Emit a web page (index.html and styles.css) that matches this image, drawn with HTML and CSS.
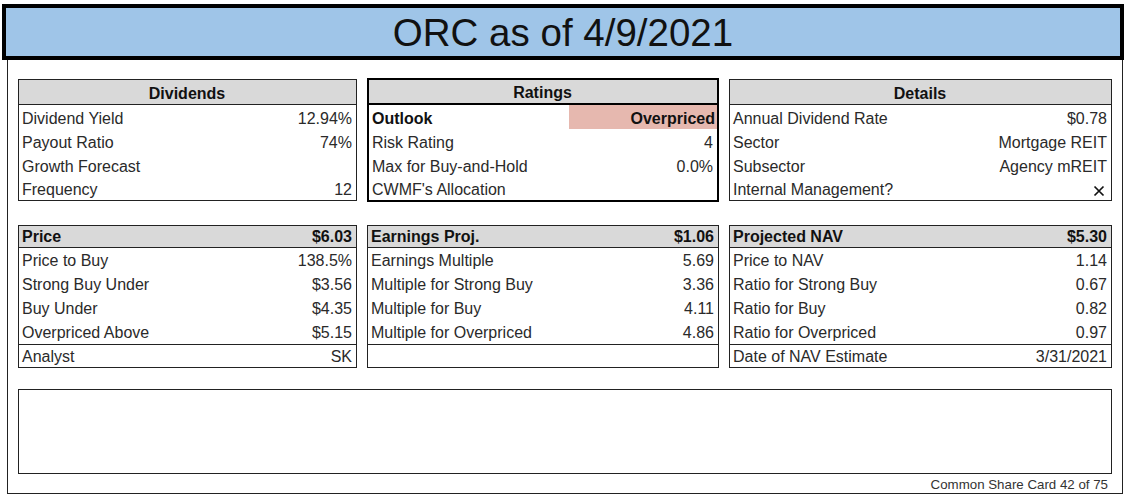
FILE: index.html
```html
<!DOCTYPE html>
<html>
<head>
<meta charset="utf-8">
<link rel="stylesheet" href="styles.css">
</head>
<body>
<div class="page">
  <div class="title">ORC as of 4/9/2021</div>
  <div class="frame">
    <div class="grid">
      <div class="box first">
        <div class="hdr center">Dividends</div>
        <div class="row"><span>Dividend Yield</span><span>12.94%</span></div>
        <div class="row"><span>Payout Ratio</span><span>74%</span></div>
        <div class="row"><span>Growth Forecast</span><span></span></div>
        <div class="row"><span>Frequency</span><span>12</span></div>
      </div>
      <div class="box first thick">
        <div class="hdr center">Ratings</div>
        <div class="row outlook"><span class="b">Outlook</span><span class="b pink">Overpriced</span></div>
        <div class="row"><span>Risk Rating</span><span>4</span></div>
        <div class="row"><span>Max for Buy-and-Hold</span><span>0.0%</span></div>
        <div class="row"><span>CWMF's Allocation</span><span></span></div>
      </div>
      <div class="box first">
        <div class="hdr center">Details</div>
        <div class="row"><span>Annual Dividend Rate</span><span>$0.78</span></div>
        <div class="row"><span>Sector</span><span>Mortgage REIT</span></div>
        <div class="row"><span>Subsector</span><span>Agency mREIT</span></div>
        <div class="row"><span>Internal Management?</span><span class="x"><svg width="12" height="12" viewBox="0 0 12 12"><path d="M1.5 1.5L10.5 10.5M10.5 1.5L1.5 10.5" stroke="#111" stroke-width="1.7" fill="none"/></svg></span></div>
      </div>

      <div class="box second">
        <div class="hdr split"><span>Price</span><span>$6.03</span></div>
        <div class="row"><span>Price to Buy</span><span>138.5%</span></div>
        <div class="row"><span>Strong Buy Under</span><span>$3.56</span></div>
        <div class="row"><span>Buy Under</span><span>$4.35</span></div>
        <div class="row"><span>Overpriced Above</span><span>$5.15</span></div>
        <div class="row last"><span>Analyst</span><span>SK</span></div>
      </div>
      <div class="box second">
        <div class="hdr split"><span>Earnings Proj.</span><span>$1.06</span></div>
        <div class="row"><span>Earnings Multiple</span><span>5.69</span></div>
        <div class="row"><span>Multiple for Strong Buy</span><span>3.36</span></div>
        <div class="row"><span>Multiple for Buy</span><span>4.11</span></div>
        <div class="row"><span>Multiple for Overpriced</span><span>4.86</span></div>
        <div class="row last"><span></span><span></span></div>
      </div>
      <div class="box second">
        <div class="hdr split"><span>Projected NAV</span><span>$5.30</span></div>
        <div class="row"><span>Price to NAV</span><span>1.14</span></div>
        <div class="row"><span>Ratio for Strong Buy</span><span>0.67</span></div>
        <div class="row"><span>Ratio for Buy</span><span>0.82</span></div>
        <div class="row"><span>Ratio for Overpriced</span><span>0.97</span></div>
        <div class="row last"><span>Date of NAV Estimate</span><span>3/31/2021</span></div>
      </div>
    </div>
    <div class="notes"></div>
    <div class="footer">Common Share Card 42 of 75</div>
  </div>
</div>
</body>
</html>
```

FILE: styles.css
```css
* { box-sizing: border-box; }
html, body { margin: 0; padding: 0; background: #fff; }
body { font-family: "Liberation Sans", Arial, sans-serif; color: #2a2a2a; }

.page { width: 1130px; height: 501px; padding-top: 4px; }

.title {
  margin-left: 2px;
  width: 1122px;
  height: 56px;
  border: 4px solid #000;
  background: #9fc5e8;
  font-size: 38.5px;
  line-height: 49px;
  text-align: center;
  color: #111;
}

.frame {
  margin-left: 7px;
  width: 1116px;
  height: 434px;
  border: 1px solid #222;
  border-top: none;
  padding: 19px 10px 0 10px;
}

.grid {
  display: grid;
  grid-template-columns: 339px 352px 383px;
  column-gap: 10px;
  row-gap: 24px;
  align-items: start;
}

.box {
  border: 1px solid #222;
  font-size: 16px;
}

.box.thick {
  border: 2px solid #000;
  margin: -1px 0;
}

.hdr {
  height: 25px;
  line-height: 27px;
  background: #d9d9d9;
  border-bottom: 1px solid #222;
  font-weight: bold;
  padding: 0 4px 0 3px;
  color: #111;
}
.thick .hdr { border-bottom: 2px solid #000; height: 25px; line-height: 26px; }
.hdr.center { text-align: center; }
.hdr.split { display: flex; justify-content: space-between; height: 22px; line-height: 22px; }

.row {
  display: flex;
  justify-content: space-between;
  align-items: center;
  height: 24px;
  padding: 3px 4px 0 3px;
  white-space: nowrap;
}
.box.second .row { padding-top: 2px; }
.box.first .row:last-child { height: 23px; }

.row.outlook { padding: 0 0 0 3px; align-items: stretch; }
.row.outlook span { display: flex; align-items: center; padding-top: 3px; }
.b { font-weight: bold; color: #111; }
.pink {
  background: #e6b8af;
  width: 148px;
  justify-content: flex-end;
  padding-right: 2px;
}

.box.second .row.last { border-top: 1px solid #222; height: 23px; padding-top: 1px; }

.x { display: flex; align-items: center; padding-right: 2px; padding-top: 2px; }

.notes {
  margin-top: 21px;
  height: 85px;
  border: 1px solid #222;
}

.footer {
  font-size: 13.3px;
  color: #333;
  text-align: right;
  padding-right: 4px;
  line-height: 21px;
}
```
